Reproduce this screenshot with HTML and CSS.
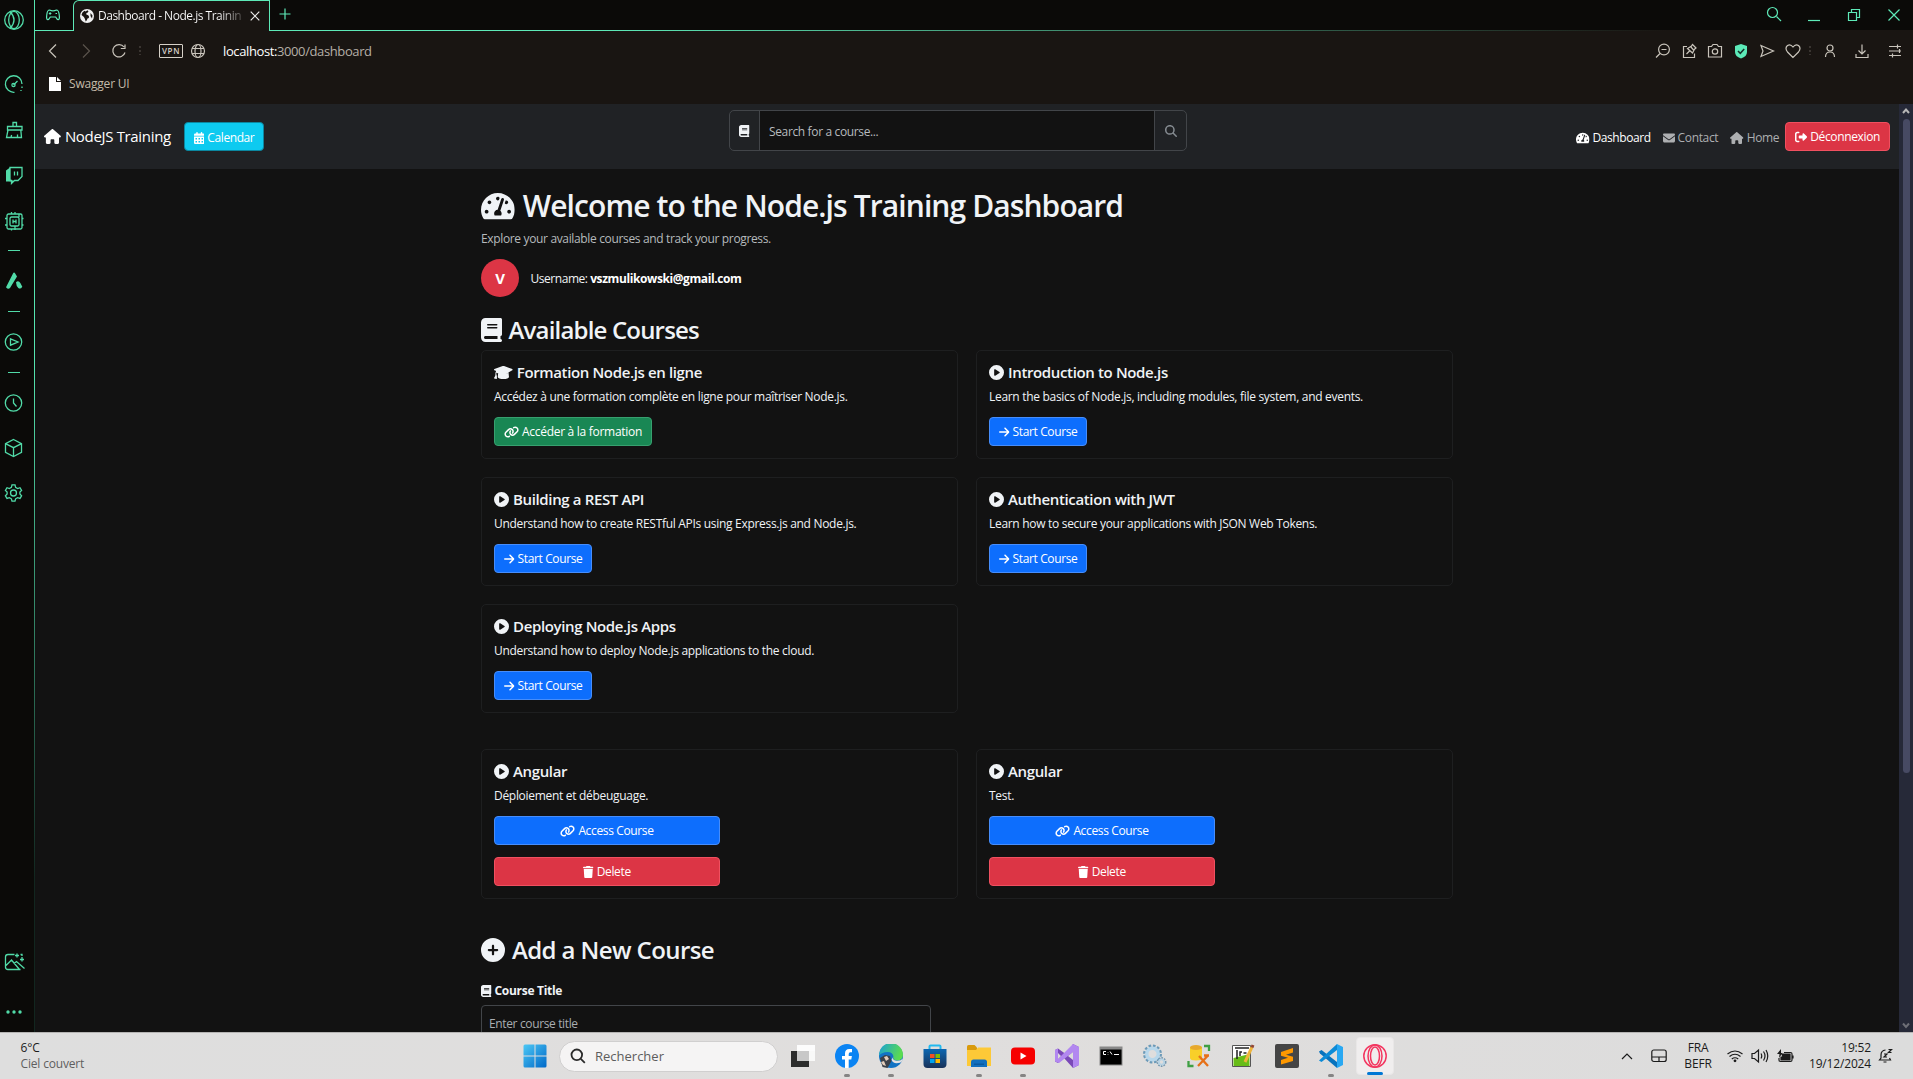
FILE: index.html
```html
<!DOCTYPE html>
<html lang="fr">
<head>
<meta charset="utf-8">
<title>Dashboard - Node.js Training</title>
<link rel="stylesheet" href="styles.css">
</head>
<body>
<svg class="sprite" aria-hidden="true">
  <symbol id="house" viewBox="0 0 576 512"><path d="M575.8 255.5c0 18-15 32.1-32 32.1l-32 0 .7 160.2c0 2.7-.2 5.4-.5 8.1l0 16.2c0 22.1-17.9 40-40 40l-16 0c-1.1 0-2.2 0-3.3-.1c-1.4 .1-2.8 .1-4.2 .1L416 512l-24 0c-22.1 0-40-17.9-40-40l0-24 0-64c0-17.7-14.3-32-32-32l-64 0c-17.7 0-32 14.3-32 32l0 64 0 24c0 22.1-17.9 40-40 40l-24 0-31.9 0c-1.5 0-3-.1-4.5-.2c-1.2 .1-2.4 .2-3.6 .2l-16 0c-22.1 0-40-17.9-40-40l0-112c0-.9 0-1.9 .1-2.8l0-69.7-32 0c-18 0-32-14-32-32.1c0-9 3-17 10-24L266.4 8c7-7 15-8 22-8s15 2 21 7L564.8 231.5c8 7 12 15 11 24z"/></symbol>
  <symbol id="book" viewBox="0 0 448 512"><path d="M96 0C43 0 0 43 0 96L0 416c0 53 43 96 96 96l288 0 32 0c17.7 0 32-14.3 32-32s-14.3-32-32-32l0-64c17.7 0 32-14.3 32-32l0-320c0-17.7-14.3-32-32-32L384 0 96 0zm0 384l256 0 0 64L96 448c-17.7 0-32-14.3-32-32s14.3-32 32-32zm32-240c0-8.8 7.2-16 16-16l192 0c8.8 0 16 7.2 16 16s-7.2 16-16 16l-192 0c-8.8 0-16-7.2-16-16zm16 48l192 0c8.8 0 16 7.2 16 16s-7.2 16-16 16l-192 0c-8.8 0-16-7.2-16-16s7.2-16 16-16z"/></symbol>
  <symbol id="magnifier" viewBox="0 0 512 512"><path d="M416 208c0 45.9-14.9 88.3-40 122.7L502.6 457.4c12.5 12.5 12.5 32.8 0 45.3s-32.8 12.5-45.3 0L330.7 376c-34.4 25.2-76.8 40-122.7 40C93.1 416 0 322.9 0 208S93.1 0 208 0S416 93.1 416 208zM208 352a144 144 0 1 0 0-288 144 144 0 1 0 0 288z"/></symbol>
  <symbol id="play" viewBox="0 0 512 512"><path d="M0 256a256 256 0 1 1 512 0A256 256 0 1 1 0 256zM188.3 147.1c-7.6 4.2-12.3 12.3-12.3 20.9l0 176c0 8.7 4.7 16.7 12.3 20.9s16.8 4.1 24.3-.5l144-88c7.1-4.4 11.5-12.1 11.5-20.5s-4.4-16.1-11.5-20.5l-144-88c-7.4-4.5-16.7-4.7-24.3-.5z"/></symbol>
  <symbol id="plus" viewBox="0 0 512 512"><path d="M256 512A256 256 0 1 0 256 0a256 256 0 1 0 0 512zM232 344l0-64-64 0c-13.3 0-24-10.7-24-24s10.7-24 24-24l64 0 0-64c0-13.3 10.7-24 24-24s24 10.7 24 24l0 64 64 0c13.3 0 24 10.7 24 24s-10.7 24-24 24l-64 0 0 64c0 13.3-10.7 24-24 24s-24-10.7-24-24z"/></symbol>
  <symbol id="envelope" viewBox="0 0 512 512"><path d="M48 64C21.5 64 0 85.5 0 112c0 15.1 7.1 29.3 19.2 38.4L236.8 313.6c11.4 8.5 27 8.5 38.4 0L492.8 150.4c12.1-9.1 19.2-23.3 19.2-38.4c0-26.5-21.5-48-48-48L48 64zM0 176L0 384c0 35.3 28.7 64 64 64l384 0c35.3 0 64-28.7 64-64l0-208L294.4 339.2c-22.8 17.1-54 17.1-76.8 0L0 176z"/></symbol>
  <symbol id="trash" viewBox="0 0 448 512"><path d="M135.2 17.7L128 32 32 32C14.3 32 0 46.3 0 64S14.3 96 32 96l384 0c17.7 0 32-14.3 32-32s-14.3-32-32-32l-96 0-7.2-14.3C307.4 6.8 296.3 0 284.2 0L163.8 0c-12.1 0-23.2 6.8-28.6 17.7zM416 128L32 128 53.2 467c1.6 25.3 22.6 45 47.9 45l245.8 0c25.3 0 46.3-19.7 47.9-45L416 128z"/></symbol>
  <symbol id="arrow" viewBox="0 0 448 512"><path d="M438.6 278.6c12.5-12.5 12.5-32.8 0-45.3l-160-160c-12.5-12.5-32.8-12.5-45.3 0s-12.5 32.8 0 45.3L338.8 224 32 224c-17.7 0-32 14.3-32 32s14.3 32 32 32l306.7 0L233.4 393.4c-12.5 12.5-12.5 32.8 0 45.3s32.8 12.5 45.3 0l160-160z"/></symbol>
  <symbol id="logout" viewBox="0 0 512 512"><path d="M377.9 105.9L500.7 228.7c7.2 7.2 11.3 17.1 11.3 27.3s-4.1 20.1-11.3 27.3L377.9 406.1c-6.4 6.4-15 9.9-24 9.9c-18.7 0-33.9-15.2-33.9-33.9l0-62.1-128 0c-17.7 0-32-14.3-32-32l0-64c0-17.7 14.3-32 32-32l128 0 0-62.1c0-18.7 15.2-33.9 33.9-33.9c9 0 17.6 3.6 24 9.9zM160 96L96 96c-17.7 0-32 14.3-32 32l0 256c0 17.7 14.3 32 32 32l64 0c17.7 0 32 14.3 32 32s-14.3 32-32 32l-64 0c-53 0-96-43-96-96L0 128C0 75 43 32 96 32l64 0c17.7 0 32 14.3 32 32s-14.3 32-32 32z"/></symbol>
  <symbol id="cap" viewBox="0 0 640 512"><path d="M320 32c-8.1 0-16.1 1.4-23.7 4.1L15.8 137.4C6.3 140.9 0 149.9 0 160s6.3 19.1 15.8 22.6l57.9 20.9C57.3 229.3 48 259.8 48 291.9l0 28.1c0 28.4-10.8 57.7-22.3 80.8c-6.5 13-13.9 25.8-22.5 37.6C0 442.7-.9 448.3 .9 453.4s6 8.9 11.2 10.2l64 16c4.2 1.1 8.7 .3 12.4-2s6.3-6.1 7.1-10.4c8.6-42.8 4.3-81.2-2.1-108.7C90.3 344.3 86 329.8 80 316.5l0-24.6c0-8 1-16 3-24L296 344c8 2.800 16 4 24 4s16-1.200 24-4L624.2 182.6c9.5-3.4 15.8-12.5 15.8-22.6s-6.300-19.1-15.800-22.600L343.700 36.100C336.100 33.400 328.100 32 320 32zM128 408c0 35.300 86 72 192 72s192-36.700 192-72L496.700 262.600 354.500 334c-11.100 4-22.800 6-34.500 6s-23.500-2-34.500-6L143.300 272.600 128 408z"/></symbol>
  <symbol id="link" viewBox="0 0 640 512"><path d="M579.8 267.7c56.5-56.5 56.5-148 0-204.5c-50-50-128.8-56.5-186.3-15.4l-1.6 1.1c-14.4 10.3-17.7 30.3-7.4 44.6s30.3 17.7 44.6 7.4l1.6-1.1c32.1-22.9 76-19.3 103.8 8.6c31.5 31.5 31.5 82.5 0 114L422.3 334.8c-31.5 31.5-82.5 31.5-114 0c-27.9-27.9-31.5-71.8-8.6-103.8l1.1-1.6c10.3-14.4 6.9-34.4-7.4-44.6s-34.4-6.9-44.6 7.4l-1.1 1.6C206.5 251.2 213 330 263 380c56.5 56.5 148 56.5 204.5 0L579.8 267.7zM60.2 244.3c-56.5 56.5-56.5 148 0 204.5c50 50 128.8 56.5 186.3 15.4l1.6-1.1c14.4-10.3 17.7-30.3 7.4-44.6s-30.3-17.7-44.6-7.4l-1.6 1.1c-32.1 22.9-76 19.3-103.8-8.6C74 372 74 321 105.5 289.5L217.7 177.2c31.5-31.5 82.5-31.5 114 0c27.9 27.9 31.5 71.8 8.6 103.9l-1.1 1.6c-10.3 14.4-6.9 34.4 7.4 44.6s34.4 6.9 44.6-7.4l1.1-1.6C433.5 260.8 427 182 377 132c-56.5-56.5-148-56.5-204.5 0L60.2 244.3z"/></symbol>
  <symbol id="gauge" viewBox="0 0 576 512"><path d="M288 32C128.94 32 0 160.94 0 320c0 52.8 14.25 102.26 39.06 144.8 5.61 9.62 16.3 15.2 27.44 15.2h443c11.14 0 21.83-5.58 27.44-15.2C561.75 422.26 576 372.8 576 320c0-159.06-128.94-288-288-288zm0 64c14.71 0 26.58 10.13 30.32 23.65-1.11 2.26-2.64 4.23-3.45 6.67l-9.22 27.67c-5.13 3.49-10.97 6.01-17.64 6.01-17.67 0-32-14.33-32-32S270.33 96 288 96zM96 384c-17.67 0-32-14.33-32-32s14.33-32 32-32 32 14.33 32 32-14.33 32-32 32zm48-160c-17.67 0-32-14.33-32-32s14.33-32 32-32 32 14.33 32 32-14.33 32-32 32zm246.77-72.41l-61.33 184C343.13 347.33 352 364.54 352 384c0 11.72-3.38 22.55-8.88 32H232.88c-5.5-9.45-8.88-20.28-8.88-32 0-33.94 26.5-61.43 59.9-63.59l61.34-184.01c4.17-12.56 17.73-19.45 30.36-15.17 12.57 4.19 19.35 17.79 15.17 30.36zm14.66 57.2l15.52-46.55c3.47-1.29 7.13-2.23 11.05-2.23 17.67 0 32 14.33 32 32s-14.33 32-32 32c-11.38-.01-20.89-6.28-26.57-15.22zM480 384c-17.67 0-32-14.33-32-32s14.33-32 32-32 32 14.33 32 32-14.33 32-32 32z"/></symbol>
  <symbol id="calendar" viewBox="0 0 448 512"><path fill-rule="evenodd" d="M96 32a32 32 0 0 1 64 0V64H288V32a32 32 0 0 1 64 0V64h48a48 48 0 0 1 48 48v48H0V112A48 48 0 0 1 48 64H96zM0 192H448V464a48 48 0 0 1-48 48H48a48 48 0 0 1-48-48zM64 256v64h64v-64zm128 0v64h64v-64zm128 0v64h64v-64zM64 384v64h64v-64zm128 0v64h64v-64zm128 0v64h64v-64z"/></symbol>
</svg>

<div class="desktop">
  <aside class="sidebar">
    <svg class="side opera"><circle cx="12" cy="12" r="9.3"/><ellipse cx="12" cy="12" rx="5.3" ry="8.6"/><path d="M8 3.5q8 8.500 0 17"/></svg>
    <svg class="side speed"><path d="M12.500 20.300A8.300 8.300 0 1 1 20 12M20 14.500v1.500M19 18v1M11.500 13l4-4"/><circle cx="11.500" cy="13" r="1.600"/></svg>
    <svg class="side broom"><path d="M5.500 8.500h14.500v3.500h-14.500zM11 8.500v-4h3.500v4M6 12l-1.500 7.500h15l-.7-7.500M9 19.500l.6-2.500M15.500 19.500v-3"/></svg>
    <svg class="side twitch"><path d="M8 4.500h12v9l-4 4h-3.500l-3 3v-3h-1.500zM12.500 8.500v4M15.500 8.500v4"/><path class="solid" d="M4 7.500l4-3v12l4 1.500-3 3v-2.500h-5z"/></svg>
    <svg class="side chip"><rect x="5" y="5" width="15" height="15" rx="1.500"/><rect x="8" y="8" width="9" height="9" rx="1.500"/><path d="M11 10.500v4M14 10.500v4M11 12.500h3M9.500 3v2M13 3v2M17 5v3M9.500 20v1.500M13 17v4M3 9.500h2M3 16h2M20 9.500h1.500M20 16h1.500"/></svg>
    <hr class="tick">
    <svg class="side aria"><path class="solid" d="M11 4.500q1-2 2.200 0l1.800 3-7 11.500q-1.800 2-4-.8zM14 13.200q2.500-2.200 4.500 1l1.800 3.500q-1.800 3-4 1.300-2-1.500-2.300-5.800z"/></svg>
    <hr class="tick">
    <svg class="side player"><circle cx="11.500" cy="12" r="8.200"/><path d="M8.500 8.800l7.500 3.200-7.500 3.200z"/></svg>
    <hr class="tick">
    <svg class="side history"><circle cx="11.500" cy="12" r="8.200"/><path d="M11.500 7.500v4.500l3 3.500"/></svg>
    <svg class="side cube"><path d="M11.500 3.500l8 4.200v8.600l-8 4.200-8-4.200v-8.600zM3.500 7.700l8 4 8-4M11.500 11.700v8.800"/></svg>
    <svg class="side gear"><circle cx="11.500" cy="12" r="3"/><path d="M10 3.900h3l.6 2.500 2 1.100 2.400-.8 1.600 2.700-1.700 1.700v1.900l1.700 1.800-1.600 2.600-2.400-.8-2 1.200-.6 2.400h-3l-.6-2.400-2-1.200-2.400.8-1.600-2.600 1.700-1.800v-1.900l-1.700-1.700 1.600-2.700 2.400.8 2-1.100z"/></svg>
    <svg class="side image"><path d="M12.500 4.500H6q-2.500 0-2.500 2.500v10q0 2.500 2.500 2.500h12.500M3.500 16l6-6 8 9.500M12 13.500l2.500-2 8 7M15 3.500v4M13 5.500h4M20 7v4.500M18 9.500h4M18.500 4.500h1.500v1.500"/></svg>
    <svg class="side more"><g class="solid"><circle cx="8" cy="12" r="1.700"/><circle cx="14" cy="12" r="1.700"/><circle cx="20" cy="12" r="1.700"/></g></svg>
  </aside>

  <div class="browser">
    <header class="tabstrip">
      <div class="pad"><svg width="16" height="14" viewBox="0 0 16 14"><path d="M4.500 2Q8 3.600 11.500 2q2 0 2.600 4 .9 5.500-.8 5.700-1.300 0-2.600-2.700H5.300q-1.300 2.700-2.600 2.700-1.700-.2-.8-5.700Q2.500 2 4.500 2zM3.800 5.500h2.600M5.100 4.200v2.600M10.500 5.500h1.500"/></svg></div>
      <div class="tab">
        <svg width="14" height="14" viewBox="0 0 14 14"><circle cx="7" cy="7" r="7" fill="#f1f1f1"/><path d="M7.500 1.200q1.800 1.300.3 2.400-2 .2-1.500 2 2.500.3 2.700 2 .4 1.800-1.500 1.900-.5 2-1.800 3-.6-3-1.800-4.600L1.500 6q.4-3 3-4.300l1 .8zM10.500 4l2 2.500-.5 3-1.500-2.500z" fill="#191512"/></svg>
        <span class="tab-title">Dashboard - Node.js Trainin</span>
        <svg class="close" width="10" height="10"><path d="M.7.7l8.600 8.600M9.300.7L.7 9.300"/></svg>
      </div>
      <div class="strip-rest">
        <svg class="new-tab" width="12" height="12"><path d="M6 .5v11M.5 6h11"/></svg>
        <div class="window-buttons">
          <svg width="16" height="16"><circle cx="6.500" cy="6.500" r="5"/><path d="M10.500 10.500l4.500 4.500"/></svg>
          <svg width="16" height="16"><path d="M2 13.500h12"/></svg>
          <svg width="16" height="16"><path d="M2.500 5.500h8v8h-8zM5.500 5.500v-3h8v8h-3"/></svg>
          <svg width="16" height="16"><path d="M2.500 2.500l11 11M13.500 2.500l-11 11"/></svg>
        </div>
      </div>
    </header>

    <div class="toolbar">
      <svg class="back" width="14" height="16"><path d="M10 1.500L3.500 8l6.500 6.500"/></svg>
      <svg class="forward" width="14" height="16"><path d="M4 1.500L10.500 8 4 14.500"/></svg>
      <svg class="reload" width="16" height="16"><path d="M13 4A6.200 6.200 0 1 0 14 9.500M14 1.500V5.500H9.800"/></svg>
      <i class="dots"></i>
      <span class="vpn">VPN</span>
      <svg class="globe" width="16" height="16"><circle cx="8" cy="8" r="6.500"/><ellipse cx="8" cy="8" rx="3" ry="6.500"/><path d="M2 5.500h12M2 10.500h12"/></svg>
      <span class="url"><b>localhost:</b>3000/dashboard</span>
      <div class="actions">
        <svg width="16" height="16"><circle cx="9" cy="6.500" r="5.400"/><path d="M5 10.500L1 14.500M6.500 6.500h5"/></svg>
        <svg width="16" height="16"><path d="M6 3.500H2.500v11h11v-4M9.500 3.500l3.500 4M10.500 3l1-1.500 3.500 3.500-1.500 1.200-2 3.800-5-4.500zM8.500 8L5.500 11"/></svg>
        <svg width="16" height="16"><path d="M1.500 3.500h3l1.500-2h4l1.500 2h3v10.500h-13z"/><circle cx="8" cy="8.500" r="2.700"/></svg>
        <svg class="shield" width="16" height="16"><path d="M8 1l6 2v6q0 4.500-6 6.500-6-2-6-6.500v-6z" fill="#5ceab8"/><path d="M5 8l2.300 2.300L11.200 6" stroke="#16302a" stroke-width="1.500"/></svg>
        <svg width="16" height="16"><path d="M2 2.500L14.500 8 2 13.500 4 8z"/></svg>
        <svg width="16" height="16"><path d="M8 14.500L2.500 9Q-.5 5 2.500 2.500 5.500.500 8 4 10.500.500 13.500 2.500q3 2.500 0 6.500z"/></svg>
        <i class="dots"></i>
        <svg class="wide" width="16" height="16"><circle cx="8" cy="5" r="3"/><path d="M3.500 14Q3.500 9 8 9t4.500 5"/></svg>
        <svg class="wide" width="16" height="16"><path d="M8 1.500v9M4.500 7.500L8 11l3.500-3.500M2 11v3.500h12v-3.500"/></svg>
        <svg class="wide" width="16" height="16"><path d="M2 3.500h12M2 8h12M2 12.500h12M10.500 1.500v4M12.500 6v4M5.500 10.500v4"/></svg>
      </div>
    </div>
    <div class="bookmarks">
      <svg width="12" height="14"><path d="M0 0h7v5h5v9H0zM8 0l4 4H8z" fill="#fff"/></svg>
      <span>Swagger UI</span>
    </div>

    <div class="viewport">
      <div class="page">
        <nav class="navbar">
          <div class="brand-group">
            <a class="brand"><svg class="fa w576"><use href="#house"/></svg>NodeJS Training</a>
            <a class="btn info"><svg class="fa w448"><use href="#calendar"/></svg>Calendar</a>
          </div>
          <div class="search">
            <span class="addon"><svg class="fa w448"><use href="#book"/></svg></span>
            <span class="field">Search for a course...</span>
            <span class="addon go"><svg class="fa"><use href="#magnifier"/></svg></span>
          </div>
          <div class="links">
            <a class="active"><svg class="fa w576"><use href="#gauge"/></svg>Dashboard</a>
            <a><svg class="fa"><use href="#envelope"/></svg>Contact</a>
            <a><svg class="fa w576"><use href="#house"/></svg>Home</a>
            <a class="btn danger"><svg class="fa"><use href="#logout"/></svg>Déconnexion</a>
          </div>
        </nav>

        <main class="container">
          <h1><svg class="fa w576"><use href="#gauge"/></svg>Welcome to the Node.js Training Dashboard</h1>
          <p class="lead">Explore your available courses and track your progress.</p>
          <div class="user"><span class="avatar">V</span><span class="name">Username: <strong>vszmulikowski@gmail.com</strong></span></div>

          <h2 class="available"><svg class="fa w448"><use href="#book"/></svg>Available Courses</h2>
          <section class="cards">
            <article class="card"><h3><svg class="fa w640"><use href="#cap"/></svg>Formation Node.js en ligne</h3><p>Accédez à une formation complète en ligne pour maîtriser Node.js.</p><a class="btn success"><svg class="fa w640"><use href="#link"/></svg>Accéder à la formation</a></article>
            <article class="card"><h3><svg class="fa"><use href="#play"/></svg>Introduction to Node.js</h3><p>Learn the basics of Node.js, including modules, file system, and events.</p><a class="btn primary"><svg class="fa w448"><use href="#arrow"/></svg>Start Course</a></article>
            <article class="card"><h3><svg class="fa"><use href="#play"/></svg>Building a REST API</h3><p>Understand how to create RESTful APIs using Express.js and Node.js.</p><a class="btn primary"><svg class="fa w448"><use href="#arrow"/></svg>Start Course</a></article>
            <article class="card"><h3><svg class="fa"><use href="#play"/></svg>Authentication with JWT</h3><p>Learn how to secure your applications with JSON Web Tokens.</p><a class="btn primary"><svg class="fa w448"><use href="#arrow"/></svg>Start Course</a></article>
            <article class="card"><h3><svg class="fa"><use href="#play"/></svg>Deploying Node.js Apps</h3><p>Understand how to deploy Node.js applications to the cloud.</p><a class="btn primary"><svg class="fa w448"><use href="#arrow"/></svg>Start Course</a></article>
          </section>
          <section class="cards custom">
            <article class="card"><h3><svg class="fa"><use href="#play"/></svg>Angular</h3><p>Déploiement et débeuguage.</p><a class="btn primary block"><svg class="fa w640"><use href="#link"/></svg>Access Course</a><a class="btn danger block"><svg class="fa w448"><use href="#trash"/></svg>Delete</a></article>
            <article class="card"><h3><svg class="fa"><use href="#play"/></svg>Angular</h3><p>Test.</p><a class="btn primary block"><svg class="fa w640"><use href="#link"/></svg>Access Course</a><a class="btn danger block"><svg class="fa w448"><use href="#trash"/></svg>Delete</a></article>
          </section>

          <h2 class="add"><svg class="fa"><use href="#plus"/></svg>Add a New Course</h2>
          <label class="label"><svg class="fa w448"><use href="#book"/></svg>Course Title</label>
          <div class="input">Enter course title</div>
        </main>
      </div>
      <div class="scrollbar">
        <svg width="14" height="14"><path d="M4 9l3-3.500L10 9"/></svg>
        <i class="thumb"></i>
        <svg class="down" width="14" height="14"><path d="M4 5.500L7 9l3-3.500"/></svg>
      </div>
    </div>
  </div>
</div>

<footer class="taskbar">
  <div class="weather"><span>6°C</span><span class="muted">Ciel couvert</span></div>
  <div class="apps">
    <span class="app start"><svg width="24" height="24"><defs><linearGradient id="win" x1="0" y1="0" x2="1" y2="1"><stop offset="0" stop-color="#4cc8f5"/><stop offset="1" stop-color="#0068c8"/></linearGradient></defs><path fill="url(#win)" d="M.500 2q0-1.500 1.500-1.500h9.500v11H.500zM12.500.500H22q1.500 0 1.500 1.500v9.500h-11zM.500 12.500h11v11H2q-1.500 0-1.500-1.500zM12.500 12.500h11V22q0 1.500-1.500 1.500h-9.500z"/></svg></span>
    <span class="task-search"><svg width="16" height="16"><circle cx="6.800" cy="6.800" r="5.300"/><path d="M10.800 10.800l4 4"/></svg>Rechercher</span>
    <span class="app"><svg width="24" height="24"><path fill="#2c2c2c" d="M0 7h18v16H0z"/><path fill="#fff" opacity=".9" d="M6 1h18v6H6z"/><path fill="#c8c8c8" d="M6 7h12v10H6z"/><path fill="#fff" opacity=".8" d="M18 7h6v10h-6z"/></svg></span>
    <span class="app run"><svg width="24" height="24"><circle cx="12" cy="12" r="12" fill="#0b84f3"/><path fill="#fff" d="M10 24v-8.500H7V12h3V9.500Q10 5 14.300 5h2.700v3.200h-1.600Q13.700 8.200 13.700 10v2h3.200l-.6 3.500h-2.600V24z"/></svg></span>
    <span class="app run"><svg width="24" height="24"><defs><linearGradient id="edge" x1="0" y1="0" x2="1" y2=".3"><stop offset="0" stop-color="#1a9fd8"/><stop offset="1" stop-color="#5bdc50"/></linearGradient></defs><circle cx="12" cy="12" r="12" fill="#1273c4"/><path fill="url(#edge)" d="M0 11.500A12 12 0 0 1 24 10.500q0 5.500-5.500 6-5 0-4-3.500-.5-5-6-5Q3 8 0 11.500z"/><path fill="#e4e2e2" d="M14.500 12.500q-2 3.500 3 4.200 4.500.3 6-2 .5 2.500-2.500 4-7 1.800-8.500-3z"/><path fill="#3b4049" d="M1 14l5-3 5 1 1.500 5-4 7-5-1z"/><path fill="#e3cdbb" d="M5 13l3-1 2 3-3 2zM2 18l3-1 2 5-3-1z"/></svg></span>
    <span class="app"><svg width="24" height="24"><defs><linearGradient id="store" x1="0" y1="0" x2="0" y2="1"><stop offset="0" stop-color="#0c67b2"/><stop offset="1" stop-color="#183159"/></linearGradient></defs><path d="M6.500 6V2.500q0-1 1-1h9q1 0 1 1V6" stroke="#22b9ef" stroke-width="2" fill="none"/><path fill="url(#store)" d="M.500 5h23v15q0 4-4 4h-15q-4 0-4-4z"/><path fill="#f25022" d="M7 10h4.500v4H7z"/><path fill="#7fba00" d="M12.500 10H17v4h-4.500z"/><path fill="#00a4ef" d="M7 15h4.500v4H7z"/><path fill="#ffb900" d="M12.500 15H17v4h-4.500z"/></svg></span>
    <span class="app run"><svg width="24" height="24"><path fill="#d99a0b" d="M0 2.500q0-1.500 1.500-1.500h6L10 3.500V8H0z"/><path fill="#fdc937" d="M0 6h9l2-2.500h13V22H0z"/><path fill="#126fbd" d="M4 23v-5q0-2.500 2.500-2.500h11Q20 15.500 20 18v5z"/><path fill="#0a5aa0" d="M7 19.500h10v1.500H7z"/></svg></span>
    <span class="app run"><svg width="24" height="24"><rect y="3.500" width="24" height="17" rx="4" fill="#f60000"/><path fill="#fff" d="M9.500 8.500l6 3.500-6 3.500z"/></svg></span>
    <span class="app"><svg width="24" height="24"><path fill="#7a49b8" d="M0 6l3-1.500L12 11l6-11 6 3v18l-6 3L9 14l-6 5-3-1.500z"/><path fill="#b287f0" d="M18 0l6 3v18l-6 3V8L4 19l-4-1.500V6l3-1.500V15z"/><path fill="#dddcdc" d="M3 9l3 3-3 3zM18 8v8l-5-4z"/></svg></span>
    <span class="app"><svg width="24" height="24"><path fill="#888" d="M.500 2.500h23v19H.500z"/><path d="M1.500 5.500h21v15h-21z"/><path stroke="#fff" fill="none" d="M7 7.500H4.500v3H7M9 8v.5M9 10v.5M11 7.500l2 3M15 10.500h5"/></svg></span>
    <span class="app"><svg width="24" height="24"><g fill="none"><circle cx="9.500" cy="10" r="8" stroke="#6c9ab8" stroke-width="3" stroke-dasharray="2.600 1.600"/><circle cx="9.500" cy="10" r="5.800" stroke="#b7d7eb" stroke-width="3.500"/><circle cx="18.500" cy="18" r="4" stroke="#7598b0" stroke-width="2" stroke-dasharray="1.600 1"/><circle cx="18.500" cy="18" r="2.600" stroke="#b7d3e5" stroke-width="1.800"/></g></svg></span>
    <span class="app"><svg width="24" height="24"><path fill="#f8cf29" d="M3 3v11q0 2.500 6 2.500t6-2.500V3z"/><ellipse cx="9" cy="3.500" rx="6" ry="2.500" fill="#e7a92d"/><path d="M17 2h5v5M1.500 17v5h5" stroke="#3fa044" stroke-width="2.300" fill="none"/><path d="M12 12l9 10M20.500 12L11 22M17 11.500h5" stroke="#e67119" stroke-width="2.300" fill="none"/></svg></span>
    <span class="app"><svg width="24" height="24"><path fill="#fff" stroke="#555" d="M1.500 1.500h18v21h-18z"/><path fill="#67bc17" d="M2.500 14l16-4v12h-16z"/><path stroke="#222" stroke-width="1.500" fill="none" d="M6 6v9M9 12V8h2M12.500 9h3M4 4h14"/><path stroke="#efb43a" stroke-width="3" d="M21 3l-7 15"/><path stroke="#914535" stroke-width="3" d="M22 1l-1 2.500"/></svg></span>
    <span class="app"><svg width="24" height="24"><rect width="24" height="24" rx="2" fill="#454545"/><path fill="#ff9800" d="M6 8l12-4v4.500l-7 2.300 7 2V17L6 20.500V16l7-2.300-7-2z"/></svg></span>
    <span class="app run"><svg width="24" height="24"><path fill="#0873bd" d="M0 7.500L2.500 6 18 18v6L1 9.500z"/><path fill="#0c8bd7" d="M0 16.500L18 0v6L2.500 18z"/><path fill="#29a8f2" d="M18 0l6 3v18l-6 3z"/></svg></span>
    <span class="app run current"><svg width="24" height="24"><g fill="none" stroke="#f3355f" stroke-width="1.500"><circle cx="12" cy="12" r="11.200"/><ellipse cx="12" cy="12" rx="7" ry="11"/><ellipse cx="12" cy="12" rx="4.500" ry="9"/></g></svg></span>
  </div>
  <div class="tray">
    <svg class="up" width="16" height="16"><path d="M3 11l5-5 5 5"/></svg>
    <svg class="pad-icon" width="16" height="16"><rect x=".8" y="2" width="14.400" height="11.500" rx="2"/><path d="M1 9h14M8 9v4.500"/></svg>
    <div class="lang"><span>FRA</span><span>BEFR</span></div>
    <svg class="net" width="16" height="16"><path d="M.500 6q7.500-6 15 0M2.500 8.500q5.500-4.500 11 0M4.800 11q3.200-2.500 6.400 0"/><circle cx="8" cy="12.800" r="1.400" fill="#1b1b1b" stroke="none"/></svg>
    <svg class="net" width="18" height="16"><path d="M1 5.500h2.500l4-3.500v12l-4-3.500H1zM10 5.500q1.500 2.500 0 5M12.500 3.500q3 4.500 0 9M15 2q3.500 6 0 12"/></svg>
    <svg class="battery" width="17" height="16"><path fill="#1b1b1b" d="M5 6h8v6H4V9h2z"/><path d="M7 4.500h6.500q1.500 0 1.500 1.500v6q0 1.500-1.500 1.500h-10Q2 13.500 2 12v-2M16 7.500v3"/><path fill="#1b1b1b" stroke="none" d="M4 1L0 6h2.500L2 10l3.500-5H4z"/></svg>
    <div class="clock"><span>19:52</span><span>19/12/2024</span></div>
    <svg class="bell" width="16" height="16"><path d="M7.500 2Q3 2.500 3 7v3l-1.500 2h11l-1-2M5.500 14h3M6 6h3l-3 3h3M10.500 1.500h3l-3 3h3"/></svg>
  </div>
</footer>
</body>
</html>
```
FILE: styles.css
```css
* { box-sizing: border-box; margin: 0; padding: 0; letter-spacing: -.03em; }
html, body { width: 1913px; height: 1079px; overflow: hidden; }
body { font: 12px/18px "Open Sans", "Noto Sans", sans-serif; color: #f0f3f6; background: #121212; display: flex; flex-direction: column; }
svg { display: block; flex: none; }
.sprite { position: absolute; width: 0; height: 0; }
.desktop { display: flex; height: 1032px; }

/* Browser sidebar */
.sidebar { width: 35px; height: 1032px; background: #0b0a08; border-right: 1px solid; border-image: linear-gradient(#55e5b0 0 35%, #12261f 85%) 1; display: flex; flex-direction: column; padding: 8px 0 8px 2px; }
.side { width: 24px; height: 24px; fill: none; stroke: #51dba8; stroke-width: 1.3; }
.side .solid { fill: #51dba8; stroke: none; }
.speed { margin-top: 40px; }
.broom { margin-top: 22px; }
.twitch { margin-top: 21px; }
.chip { margin-top: 22px; }
.tick { width: 12px; height: 1px; border: 0; background: #51dba8; margin: 17px 0 0 6px; }
.aria { margin-top: 18px; }
.aria + .tick { margin-top: 18px; }
.player { margin-top: 18px; }
.player + .tick { margin-top: 18px; }
.history { margin-top: 18px; }
.cube, .gear { margin-top: 21px; }
.image { margin-top: auto; }
.more { margin: 26px 0 0 -2px; }

/* Tabs */
.browser { width: 1878px; display: flex; flex-direction: column; }
.tabstrip { height: 31px; display: flex; background: #0b0a08; flex: none; }
.pad { width: 38px; border-bottom: 1px solid #5eeab8; padding: 8px 0 0 10px; }
.pad svg, .new-tab, .window-buttons svg { fill: none; stroke: #5eeab8; stroke-width: 1.2; }
.tab { width: 197px; border: 1px solid #5eeab8; border-bottom: 0; border-radius: 6px 0 0 0; background: #191512; display: flex; align-items: center; padding: 0 9px 0 6px; color: #fff; }
.tab-title { width: 146px; margin: 0 6px 0 4px; white-space: nowrap; color: transparent; background: linear-gradient(90deg, #fff 83%, #3a3633 100%); -webkit-background-clip: text; background-clip: text; letter-spacing: -.041em; }
.close { stroke: #eee; stroke-width: 1.2; }
.strip-rest { flex: 1; display: flex; justify-content: space-between; background: linear-gradient(90deg, #5eeab8 0 20%, #191512 85%) 0 100% / 100% 1px no-repeat; }
.new-tab { margin: 8px 0 0 9px; }
.window-buttons { display: flex; gap: 24px; padding: 7px 11px 0 0; }
.window-buttons svg:first-child { margin-top: -1px; }

/* Address bar */
.toolbar { height: 41px; background: #191512; display: flex; align-items: center; flex: none; padding-bottom: 2px; }
.toolbar svg { fill: none; stroke: #c9c4bb; stroke-width: 1.2; }
.back { margin-left: 11px; }
.toolbar .forward { margin-left: 19px; stroke: #5a534c; }
.reload { margin-left: 18px; }
.dots { width: 2px; height: 9px; background: repeating-linear-gradient(#3a3531 0 2px, transparent 2px 4px); margin-left: 12px; }
.vpn { margin-left: 18px; width: 24px; height: 14px; border: 1px solid #d6d1c8; border-radius: 1px; font-size: 8px; font-weight: 600; line-height: 12px; text-align: center; letter-spacing: .08em; color: #d6d1c8; }
.globe { margin-left: 7px; }
.url { margin-left: 17px; font-size: 13px; color: #b5afa7; }
.url b { font-weight: 400; color: #fff; }
.actions { margin-left: auto; display: flex; align-items: center; padding-right: 10px; gap: 10px; }
.actions .dots { margin: 0 -4px 0 -2px; }
.actions .wide { margin-left: 6px; }
.actions .dots + .wide { margin-left: 5px; }
.actions .wide:last-child { margin-left: 7px; }
.actions .shield { stroke: none; }
.bookmarks { height: 32px; background: #191512; display: flex; align-items: flex-start; gap: 8px; padding: 5px 0 0 14px; color: #c4baa8; flex: none; }
.bookmarks span { line-height: 14px; letter-spacing: -.016em; }

/* Page shell */
.viewport { display: flex; height: 928px; overflow: hidden; }
.page { width: 1864px; height: 928px; overflow: hidden; background: #121212; }
.scrollbar { width: 14px; background: #262938; display: flex; flex-direction: column; align-items: center; }
.scrollbar svg { fill: none; stroke: #b6b6b6; stroke-width: 2; }
.scrollbar .down { margin-top: auto; stroke: #6d6e76; }
.thumb { width: 7px; height: 654px; border-radius: 4px; background: #474a63; margin-top: 1px; }
.fa { height: 1em; width: 1em; fill: currentColor; }
.w448 { width: .875em; }
.w576 { width: 1.125em; }
.w640 { width: 1.25em; }

/* Navbar */
.navbar { height: 65px; background: #202225; display: flex; align-items: center; padding: 0 9px; }
.brand-group { width: 685px; display: flex; align-items: center; gap: 13px; }
.brand { display: flex; align-items: center; gap: 4px; padding-bottom: 1px; font-size: 15px; letter-spacing: -.022em; color: #fff; }
.btn { display: inline-flex; align-items: center; justify-content: center; gap: 3px; height: 29px; padding: 0 9px; border: 1px solid; border-radius: 4px; color: #fff; }
.info { background: #0dcaf0; border-color: #0b87a0; padding-top: 2px; letter-spacing: -.034em; }
.primary { background: #0d6efd; border-color: #478dfa; padding-right: 8px; }
.success { background: #198754; border-color: #37a06f; letter-spacing: -.024em; }
.danger { background: #dc3545; border-color: #f05060; }
.search { width: 458px; height: 41px; align-self: flex-start; margin-top: 6px; display: flex; border: 1px solid #424549; border-radius: 5px; overflow: hidden; }
.addon { width: 30px; display: flex; align-items: center; justify-content: center; border-right: 1px solid #424549; }
.addon.go { width: 32px; border: 0; border-left: 1px solid #424549; color: #858b91; }
.field { flex: 1; background: #121212; padding: 12px 0 0 9px; color: #b7bbbe; }
.links { margin-left: auto; display: flex; align-items: center; }
.links a:not(.btn) { display: flex; align-items: center; gap: 3px; margin: 2px 12px 0 0; color: #adafb1; }
.links a.active { color: #fff; letter-spacing: -.036em; }
.links a:not(.btn):nth-child(3) { margin-right: 6px; }
.links .btn { gap: 3px; }

/* Dashboard content */
.container { width: 972px; margin: 0 auto; padding-top: 19px; }
h1, h2, h3 { display: flex; align-items: center; font-weight: 600; }
h1 { font-size: 30px; line-height: 36px; gap: 8px; }
h2 { font-size: 24px; line-height: 29px; gap: 7px; }
h3 { font-size: 15px; line-height: 18px; gap: 4px; letter-spacing: -.024em; }
.lead { margin-top: 6px; color: #b6babd; letter-spacing: -.029em; }
.user { display: flex; align-items: center; gap: 11.500px; margin-top: 11px; }
.avatar { width: 38px; height: 38px; border-radius: 50%; background: #dc3545; color: #fff; font-size: 15px; font-weight: 700; line-height: 39px; text-align: center; }
.name { padding-top: 2px; letter-spacing: -.038em; }
.user strong { font-weight: 700; color: #fff; letter-spacing: -.034em; }
.available { margin-top: 18px; gap: 6.500px; letter-spacing: -.034em; }
.cards { display: grid; grid-template-columns: 477px 477px; gap: 18px; margin-top: 6px; }
.cards.custom { margin-top: 36px; }
.card { border: 1px solid #1e1f20; border-radius: 5px; padding: 12px; }
.card p { margin: 7px 0 11px; letter-spacing: -.025em; }
.card .btn { vertical-align: top; }
.card .block { display: flex; width: 226px; padding: 0 9px; }
.block + .block { margin-top: 12px; }
.add { margin-top: 36px; letter-spacing: -.025em; }
.label { display: flex; align-items: center; gap: 3px; font-weight: 700; margin-top: 18px; letter-spacing: -.025em; }
.input { width: 450px; height: 37px; border: 1px solid #424549; border-radius: 4px; margin-top: 5px; padding: 9px 7px; color: #a9adb1; }

/* Taskbar */
.taskbar { height: 47px; background: linear-gradient(90deg, #dedede, #e0dedd 48%, #dcdcdc); border-top: 1px solid #b5b4b3; display: flex; align-items: center; color: #1b1b1b; line-height: 16px; font-size: 12px; }
.taskbar span { letter-spacing: -.014em; }
.weather { width: 492px; padding-left: 20.500px; display: flex; flex-direction: column; }
.muted { color: #5f5f5f; }
.apps { display: flex; align-items: center; margin-left: 20.500px; }
.app { width: 44px; height: 46px; display: flex; align-items: center; justify-content: center; position: relative; }
.app.run::after { content: ""; position: absolute; left: 19px; bottom: 2px; width: 6px; height: 3px; border-radius: 2px; background: #858484; }
.task-search { width: 219px; height: 31px; margin: 0 2px 0 2.500px; border-radius: 16px; background: #f5f4f4; border: 1px solid #d0cfcf; display: flex; align-items: center; gap: 9px; padding-left: 10px; font-size: 13px; color: #5d5d5d; }
.task-search svg { fill: none; stroke: #2a2a2a; stroke-width: 1.8; }
.taskbar .task-search { letter-spacing: 0; }
.app:not(.start) { left: 1px; }
.app.current { width: 38px; height: 38px; margin-left: 3px; border-radius: 4px; background: #f0eeee; border: 1px solid #e9e7e7; }
.app.current::after { left: 10px; width: 16px; bottom: -1px; background: #0078d4; }
.tray { margin-left: auto; display: flex; align-items: center; padding-right: 19px; }
.tray svg { fill: none; stroke: #1b1b1b; stroke-width: 1.2; }
.lang, .clock { display: flex; flex-direction: column; }
.lang { width: 30px; text-align: center; margin: 0 14px 0 16px; }
.pad-icon { margin-left: 16px; }
.net { margin-right: 8px; }
.clock { text-align: right; margin: 0 7px 0 15px; }
```
